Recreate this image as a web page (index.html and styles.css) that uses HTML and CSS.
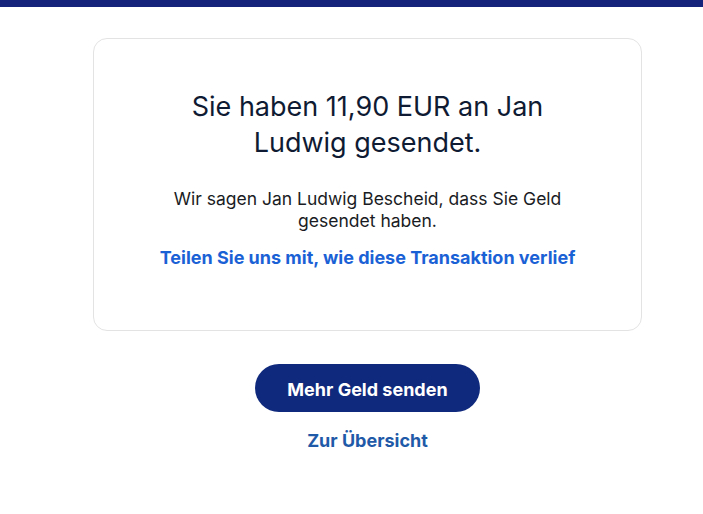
FILE: index.html
```html
<!DOCTYPE html>
<html lang="de">
<head>
    <meta charset="UTF-8">
    <meta name="viewport" content="width=device-width, initial-scale=1.0">
    <title>Zahlung gesendet</title>
    <link rel="stylesheet" href="styles.css">
</head>
<body>
    <div class="topbar"></div>

    <main class="main">
        <div class="card">
            <h1 class="title">Sie haben 11,90 EUR an Jan Ludwig gesendet.</h1>
            <p class="text">Wir sagen Jan Ludwig Bescheid, dass Sie Geld gesendet haben.</p>
            <p class="feedback"><a class="link" href="#">Teilen Sie uns mit, wie diese Transaktion verlief</a></p>
        </div>

        <div class="actions">
            <button class="btn">Mehr Geld senden</button>
            <a class="link link-sub" href="#">Zur Übersicht</a>
        </div>
    </main>
</body>
</html>
```

FILE: styles.css
```css
/* Seite */
body {
    margin: 0;
    font-family: Inter, "Liberation Sans", Arial, sans-serif;
    background: #fff;
    color: #0f1a33;
}

.topbar {
    height: 7px;
    background-color: #15237a;
}

.main {
    padding: 31px 61px 0 93px;
}

/* Karte */
.card {
    border: 1px solid #e3e3e3;
    border-radius: 14px;
    height: 293px;
    padding: 50px 40px 0;
    text-align: center;
    box-sizing: border-box;
}

.title {
    font-size: 27px;
    font-weight: 400;
    line-height: 36px;
    margin: 0 auto;
    max-width: 380px;
}

.text {
    font-size: 17.5px;
    line-height: 22px;
    color: #1a1c24;
    margin: 27px auto 0;
    max-width: 410px;
}

.feedback {
    font-size: 18px;
    line-height: 22px;
    margin: 15px 0 0;
}

.link {
    font-weight: 700;
    color: #1b61d6;
    text-decoration: none;
}

/* Buttons */
.actions {
    display: flex;
    flex-direction: column;
    align-items: center;
    padding-top: 33px;
}

.btn {
    width: 225px;
    height: 48px;
    padding: 2px 0 0;
    border: none;
    border-radius: 24px;
    background-color: #0f297c;
    color: #fff;
    font-family: inherit;
    font-size: 18px;
    font-weight: 700;
    cursor: pointer;
}

.link-sub {
    margin-top: 18px;
    font-size: 18px;
    line-height: 22px;
    color: #1f5aa8;
}
```
